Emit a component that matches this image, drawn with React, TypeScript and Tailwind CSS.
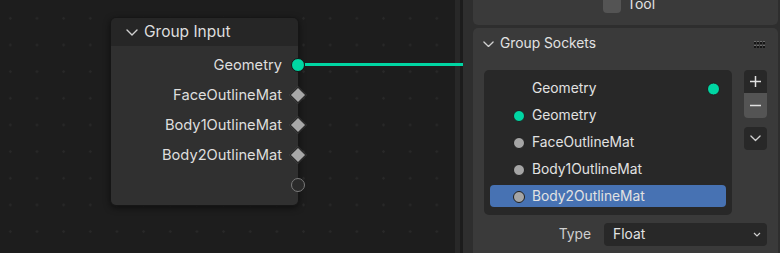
import React from "react";

const TEAL = "#00d6a3";

function Chevron({ className = "", size = 12 }: { className?: string; size?: number }) {
  return (
    <svg width={size} height={size / 2 + 1} viewBox="0 0 12 7" className={className} fill="none">
      <path d="M1 1 L6 6 L11 1" stroke="#d0d0d0" strokeWidth="1.4" strokeLinecap="round" strokeLinejoin="round" />
    </svg>
  );
}

function NodeRow({ label, socket }: { label: string; socket: "geo" | "diamond" | "empty" }) {
  return (
    <div className="relative h-[30px] flex items-center justify-end pr-[16px]">
      {label && <span className="text-[14.7px] text-[#dedede] leading-none">{label}</span>}
      {socket === "geo" && (
        <div className="absolute right-[-7px] top-1/2 -translate-y-1/2 w-[14px] h-[14px] rounded-full border border-[#151515]" style={{ background: TEAL }} />
      )}
      {socket === "diamond" && (
        <div className="absolute right-[-6px] top-1/2 -translate-y-1/2 w-[12px] h-[12px] rotate-45 bg-[#a8a8a8] border border-[#1a1a1a]" />
      )}
      {socket === "empty" && (
        <div className="absolute right-[-7px] top-1/2 -translate-y-1/2 w-[14px] h-[14px] rounded-full border-[1.5px] border-[#7a7a7a] bg-[#2a2a2a]" />
      )}
    </div>
  );
}

function ListRow({ label, dot, selected, right }: { label: string; dot?: string; selected?: boolean; right?: boolean }) {
  return (
    <div className="relative h-[27px] flex items-center">
      {selected && <div className="absolute inset-x-0 top-[2px] bottom-[3px] bg-[#4772b3] rounded-[4px]" />}
      <div className="relative w-[42px] h-full flex items-center">
        {dot && !right && (
          <div className="ml-[23px] w-[12px] h-[12px] rounded-full border border-[#1e1e1e]" style={{ background: dot }} />
        )}
      </div>
      <span className="relative text-[13.8px] text-[#e2e2e2] leading-none">{label}</span>
      {right && dot && (
        <div className="absolute right-[6px] top-1/2 -translate-y-1/2 w-[13px] h-[13px] rounded-full border border-[#1e1e1e]" style={{ background: dot }} />
      )}
    </div>
  );
}

export default function App() {
  return (
    <div className="relative w-[780px] h-[253px] flex overflow-hidden" style={{ fontFamily: "Inter, 'Noto Sans', sans-serif" }}>
      {/* node editor canvas */}
      <div className="relative w-[455px] h-full bg-[#1d1d1d] bg-[radial-gradient(circle,#282828_1px,transparent_1.5px)] bg-[length:26.67px_26.67px] bg-[position:-3px_5px]">
        <div className="absolute left-[110px] top-[17px] w-[189px] rounded-[6px] border border-[#161616] shadow-[0_2px_6px_rgba(0,0,0,0.5)]">
          <div className="h-[28px] bg-[#262626] rounded-t-[5px] flex items-center pl-[15px] gap-[6px]">
            <Chevron />
            <span className="text-[15.5px] text-[#dedede] leading-none">Group Input</span>
          </div>
          <div className="bg-[#303030] rounded-b-[5px] pt-[4px] pb-[5px]">
            <NodeRow label="Geometry" socket="geo" />
            <NodeRow label="FaceOutlineMat" socket="diamond" />
            <NodeRow label="Body1OutlineMat" socket="diamond" />
            <NodeRow label="Body2OutlineMat" socket="diamond" />
            <NodeRow label="" socket="empty" />
          </div>
        </div>
      </div>
      <div className="w-[5px] h-full bg-[#282828]" />
      <div className="w-[3px] h-full bg-[#1c1c1c]" />

      {/* sidebar */}
      <div className="flex-1 h-full bg-[#2e2e2e] pl-[10px] pr-[2px] flex flex-col">
        <div className="h-[25px] bg-[#3a3a3a] rounded-b-[5px] overflow-hidden">
          <div className="mt-[-5px] h-[18px] flex items-center pl-[130px] gap-[6px]">
            <div className="w-[18px] h-[18px] rounded-[4px] bg-[#545454]" />
            <span className="text-[14px] text-[#e2e2e2] leading-none">Tool</span>
          </div>
        </div>
        <div className="mt-[3px] flex-1 bg-[#3a3a3a] rounded-t-[5px] flex flex-col">
          <div className="h-[32px] flex items-center pl-[10px] pr-[13px]">
            <Chevron size={11} />
            <span className="ml-[6px] text-[13.8px] text-[#e2e2e2] leading-none">Group Sockets</span>
            <div className="ml-auto grid grid-cols-4 gap-x-[1px] gap-y-[1px]">
              {Array.from({ length: 8 }).map((_, i) => (
                <div key={i} className="w-[2px] h-[3px] border-t border-[#6a6a6a] bg-[#141414]" />
              ))}
            </div>
          </div>
          <div className="mt-[10px] flex pl-[11px]">
            <div className="w-[248px] bg-[#282828] rounded-[5px] px-[6px] pt-[5px] pb-[5px]">
              <ListRow label="Geometry" dot={TEAL} right />
              <ListRow label="Geometry" dot={TEAL} />
              <ListRow label="FaceOutlineMat" dot="#a5a5a5" />
              <ListRow label="Body1OutlineMat" dot="#a5a5a5" />
              <ListRow label="Body2OutlineMat" dot="#a5a5a5" selected />
            </div>
            <div className="ml-[12px] w-[23px] flex flex-col">
              <div className="h-[23px] bg-[#282828] rounded-t-[4px] flex items-center justify-center">
                <svg width="13" height="13" viewBox="0 0 13 13"><path d="M6.5 1 V12 M1 6.5 H12" stroke="#e0e0e0" strokeWidth="1.5" /></svg>
              </div>
              <div className="h-[25px] bg-[#545454] rounded-b-[4px] flex items-center justify-center">
                <svg width="13" height="13" viewBox="0 0 13 13"><path d="M1 6.5 H12" stroke="#e0e0e0" strokeWidth="1.5" /></svg>
              </div>
              <div className="mt-[9px] h-[23px] bg-[#282828] rounded-[4px] flex items-center justify-center">
                <Chevron size={11} />
              </div>
            </div>
          </div>
          <div className="mt-[8px] flex items-center">
            <div className="w-[118px] text-right text-[13.8px] text-[#cfcfcf] leading-none">Type</div>
            <div className="ml-[13px] w-[163px] h-[23px] bg-[#282828] rounded-[4px] flex items-center pl-[9px] pr-[6px]">
              <span className="text-[13.8px] text-[#e2e2e2] leading-none">Float</span>
              <svg className="ml-auto" width="8" height="5" viewBox="0 0 8 5"><path d="M1 1 L4 4 L7 1" stroke="#d0d0d0" strokeWidth="1.2" fill="none" /></svg>
            </div>
          </div>
        </div>
      </div>

      {/* connection link */}
      <div className="absolute left-[305px] top-[63px] w-[158px] h-[3px]" style={{ background: TEAL }} />
    </div>
  );
}
